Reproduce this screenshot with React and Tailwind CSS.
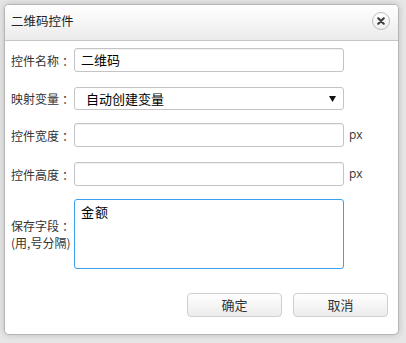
import React from 'react';

const font = { fontFamily: '"Microsoft YaHei", "Noto Sans CJK SC", "Noto Sans", sans-serif' };

const Colon = () => <span className="ml-[3px]">：</span>;

const Field = ({ label, children, className = '' }) => (
    <div className={`flex items-center ${className}`}>
        <label className="w-[63px] shrink-0 whitespace-nowrap text-[12px] leading-[17px] text-[#333]">{label}</label>
        {children}
    </div>
);

const TextInput = ({ value = '' }) => (
    <div className="w-[270px] h-[24px] shrink-0 border border-[#c4c4c4] rounded-[3px] bg-white shadow-[inset_0_1px_1px_rgba(0,0,0,0.06)] flex items-center px-[6px] text-[13px] text-black">
        {value}
    </div>
);

const Px = () => (
    <span className="ml-[5px] text-[12px] text-[#333]" style={{ fontFamily: '"Open Sans", "Noto Sans", sans-serif' }}>px</span>
);

export default function App() {
    return (
        <div className="w-[406px] h-[343px] bg-[#e6e6e6] pt-[4px] pl-[4px]" style={font}>
            <div className="w-[395px] h-[331px] bg-white border border-[#b5b5b5] rounded-[5px] shadow-[0_0_6px_rgba(0,0,0,0.18)] flex flex-col overflow-hidden">
                {/* Header */}
                <div className="h-[36px] shrink-0 flex items-center justify-between pl-[6px] pr-[8px] pb-[3px] bg-gradient-to-b from-white to-[#ebebeb] border-b border-[#c6c6c6]">
                    <span className="text-[12.5px] text-[#222]">二维码控件</span>
                    <button className="w-[18px] h-[18px] rounded-full border border-[#bdbdbd] bg-gradient-to-b from-white to-[#f0f0f0] flex items-center justify-center">
                        <svg width="8" height="8" viewBox="0 0 8 8">
                            <path d="M1.3 1.3 L6.7 6.7 M6.7 1.3 L1.3 6.7" stroke="#3f3f3f" strokeWidth="2.2" strokeLinecap="round" />
                        </svg>
                    </button>
                </div>

                {/* Body */}
                <div className="flex-1 flex flex-col pl-[6px] pr-[10px] pt-[7px]">
                    <Field label={<>控件名称<Colon /></>}>
                        <TextInput value="二维码" />
                    </Field>

                    <Field label={<>映射变量<Colon /></>} className="mt-[15px]">
                        <div className="w-[270px] h-[23px] shrink-0 border border-[#c4c4c4] rounded-[3px] bg-white flex items-center justify-between pl-[11px] pr-[7px] text-[13px] text-black">
                            <span>自动创建变量</span>
                            <svg width="7" height="6" viewBox="0 0 7 6">
                                <path d="M0 0 H7 L3.5 6 Z" fill="#111" />
                            </svg>
                        </div>
                    </Field>

                    <Field label={<>控件宽度<Colon /></>} className="mt-[13px]">
                        <TextInput />
                        <Px />
                    </Field>

                    <Field label={<>控件高度<Colon /></>} className="mt-[15px]">
                        <TextInput />
                        <Px />
                    </Field>

                    <Field label={<>保存字段<Colon /><br />(用,号分隔)</>} className="mt-[13px]">
                        <div className="w-[270px] h-[70px] shrink-0 border border-[#3aa0f0] rounded-[3px] bg-white px-[6px] pt-[2px] text-[13px] tracking-[1px] text-black">
                            金额
                        </div>
                    </Field>

                    <div className="mt-[24px] flex justify-end gap-[11px]">
                        <button className="w-[95px] h-[24px] rounded-[4px] border border-[#cfcfcf] bg-gradient-to-b from-white to-[#ececec] text-[13px] text-[#333]">确定</button>
                        <button className="w-[95px] h-[24px] rounded-[4px] border border-[#cfcfcf] bg-gradient-to-b from-white to-[#ececec] text-[13px] text-[#333]">取消</button>
                    </div>
                </div>
            </div>
        </div>
    );
}
